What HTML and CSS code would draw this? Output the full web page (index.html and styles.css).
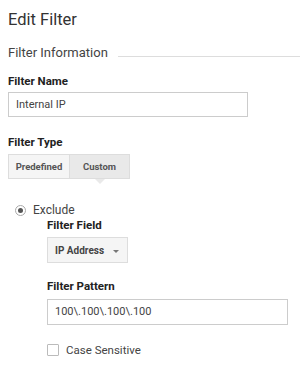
FILE: index.html
```html
<!DOCTYPE html>
<html lang="en">
<head>
  <meta charset="UTF-8" />
  <title>Edit Filter</title>
  <link rel="stylesheet" href="styles.css">
</head>
<body>
<div class="page">
  <h1 class="title">Edit Filter</h1>

  <!-- Filter Information -->
  <div class="section-head">
    <span>Filter Information</span>
    <div class="rule"></div>
  </div>

  <div class="label name-label">Filter Name</div>
  <div class="text-input name-input">Internal IP</div>

  <div class="label type-label">Filter Type</div>
  <div class="tabs">
    <div class="tab">Predefined</div>
    <div class="tab active">Custom</div>
  </div>

  <div class="radio-row">
    <span class="radio"><span class="dot"></span></span>
    <span>Exclude</span>
  </div>

  <div class="indent">
    <div class="label">Filter Field</div>
    <div class="select">
      <span>IP Address</span>
      <span class="caret"></span>
    </div>

    <div class="label pattern-label">Filter Pattern</div>
    <div class="text-input pattern-input">100\.100\.100\.100</div>

    <div class="check-row">
      <span class="checkbox"></span>
      <span>Case Sensitive</span>
    </div>
  </div>
</div>
</body>
</html>
```

FILE: styles.css
```css
body {
  margin: 0;
  font-family: Roboto, "Liberation Sans", sans-serif;
  background: #fff;
  color: #333;
}

.page {
  padding: 9px 8px 0;
}

.title {
  margin: 0;
  font-size: 16.5px;
  font-weight: 400;
  line-height: 21px;
  color: #333;
}

/* Section heading with rule */
.section-head {
  display: flex;
  align-items: flex-start;
  margin-top: 15px;
  font-size: 13px;
  line-height: 16px;
  color: #444;
}

.rule {
  flex: 1;
  height: 1px;
  background: #ddd;
  margin: 11px -8px 0 10px;
}

.label {
  font-size: 11.5px;
  font-weight: 700;
  line-height: 14px;
  color: #222;
}

.name-label {
  margin-top: 13px;
}

.text-input {
  box-sizing: border-box;
  height: 25px;
  border: 1px solid #ccc;
  padding: 0 7px;
  font-size: 11px;
  line-height: 23px;
  color: #444;
}

.name-input {
  width: 240px;
  margin-top: 4px;
}

.type-label {
  margin-top: 18px;
}

/* Tabs */
.tabs {
  display: flex;
  margin-top: 5px;
}

.tab {
  position: relative;
  box-sizing: border-box;
  height: 25px;
  border: 1px solid #ddd;
  background: #f5f5f5;
  font-size: 9.5px;
  font-weight: 700;
  line-height: 23px;
  color: #555;
  text-align: center;
  width: 62px;
}

.tab.active {
  width: 60px;
  border-left: none;
  background: #e9e9e9;
}

.tab.active::after {
  content: '';
  position: absolute;
  left: 50%;
  bottom: -6px;
  margin-left: -5px;
  border-left: 5px solid transparent;
  border-right: 5px solid transparent;
  border-top: 5px solid #e9e9e9;
}

/* Radio */
.radio-row {
  display: flex;
  align-items: center;
  gap: 7px;
  margin-top: 23px;
  padding-left: 7px;
  font-size: 12px;
  line-height: 16px;
  color: #444;
}

.radio {
  box-sizing: border-box;
  width: 11px;
  height: 11px;
  border: 1px solid #aaa;
  border-radius: 50%;
  display: flex;
  align-items: center;
  justify-content: center;
}

.dot {
  width: 5px;
  height: 5px;
  border-radius: 50%;
  background: #555;
}

.indent {
  padding-left: 39px;
}

/* Select */
.select {
  box-sizing: border-box;
  width: 81px;
  height: 26px;
  margin-top: 5px;
  border: 1px solid #ddd;
  background: #f5f5f5;
  display: flex;
  align-items: center;
  justify-content: space-between;
  padding: 0 8px 0 7px;
  font-size: 10px;
  font-weight: 700;
  color: #444;
}

.caret {
  border-left: 3px solid transparent;
  border-right: 3px solid transparent;
  border-top: 3px solid #777;
  margin-top: 2px;
}

.pattern-label {
  margin-top: 16px;
}

.pattern-input {
  width: 241px;
  height: 26px;
  line-height: 24px;
  margin-top: 6px;
}

/* Checkbox */
.check-row {
  display: flex;
  align-items: center;
  gap: 7px;
  margin-top: 17px;
  font-size: 11.5px;
  line-height: 16px;
  color: #444;
}

.checkbox {
  box-sizing: border-box;
  width: 12px;
  height: 12px;
  border: 1px solid #bbb;
  border-radius: 1px;
}
```
